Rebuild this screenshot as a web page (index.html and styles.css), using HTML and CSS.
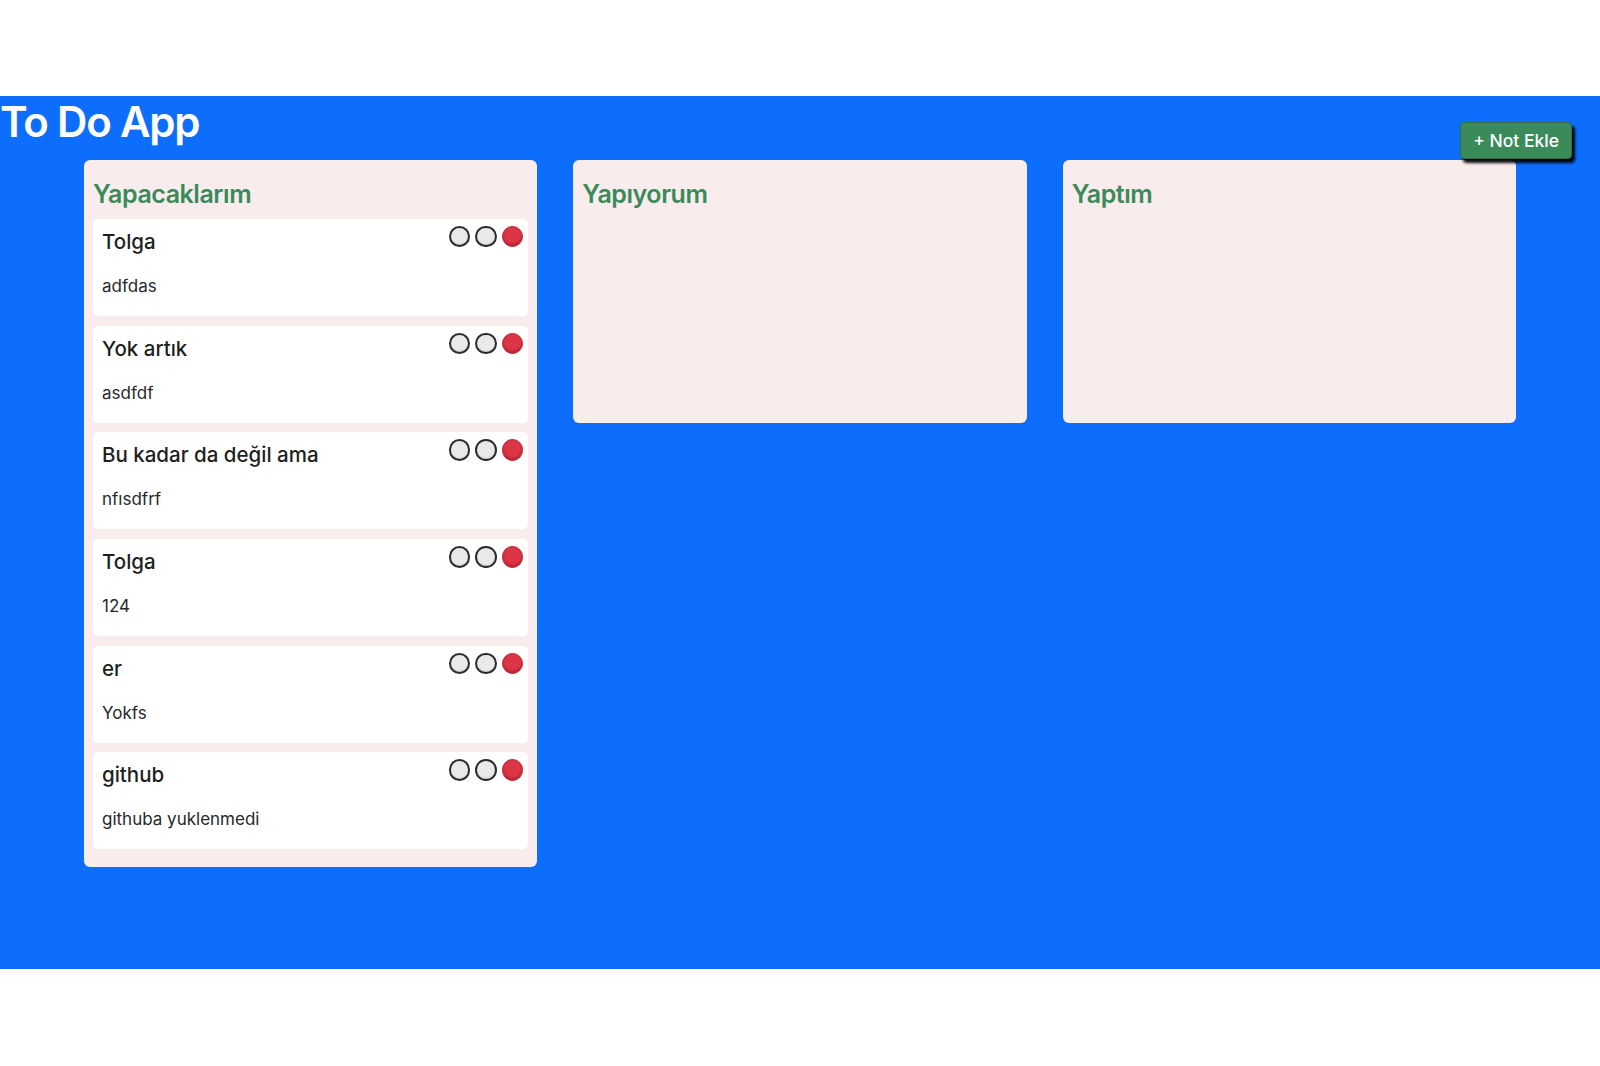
FILE: index.html
```html
<!DOCTYPE html>
<html lang="tr">
<head>
<meta charset="utf-8">
<title>To Do App</title>
<link rel="stylesheet" href="styles.css">
</head>
<body>
<div class="page">
  <main class="app">
    <header class="app-header">
      <h1 class="app-title">To Do App</h1>
      <button class="add-btn" type="button">+ Not Ekle</button>
    </header>
    <div class="board">
      <section class="column">
        <h3 class="column-title">Yapacaklarım</h3>
        <div class="card">
          <div class="card-head"><h5 class="card-title">Tolga</h5><div class="dots"><span class="dot"></span><span class="dot"></span><span class="dot dot-red"></span></div></div>
          <p class="card-text">adfdas</p>
        </div>
        <div class="card">
          <div class="card-head"><h5 class="card-title">Yok artık</h5><div class="dots"><span class="dot"></span><span class="dot"></span><span class="dot dot-red"></span></div></div>
          <p class="card-text">asdfdf</p>
        </div>
        <div class="card">
          <div class="card-head"><h5 class="card-title">Bu kadar da değil ama</h5><div class="dots"><span class="dot"></span><span class="dot"></span><span class="dot dot-red"></span></div></div>
          <p class="card-text">nfısdfrf</p>
        </div>
        <div class="card">
          <div class="card-head"><h5 class="card-title">Tolga</h5><div class="dots"><span class="dot"></span><span class="dot"></span><span class="dot dot-red"></span></div></div>
          <p class="card-text">124</p>
        </div>
        <div class="card">
          <div class="card-head"><h5 class="card-title">er</h5><div class="dots"><span class="dot"></span><span class="dot"></span><span class="dot dot-red"></span></div></div>
          <p class="card-text">Yokfs</p>
        </div>
        <div class="card">
          <div class="card-head"><h5 class="card-title">github</h5><div class="dots"><span class="dot"></span><span class="dot"></span><span class="dot dot-red"></span></div></div>
          <p class="card-text">githuba yuklenmedi</p>
        </div>
      </section>
      <section class="column">
        <h3 class="column-title">Yapıyorum</h3>
      </section>
      <section class="column">
        <h3 class="column-title">Yaptım</h3>
      </section>
    </div>
  </main>
</div>
</body>
</html>
```

FILE: styles.css
```css
* { box-sizing: border-box; }
html, body { margin: 0; padding: 0; background: #ffffff; }
body { font-family: Inter, "Liberation Sans", Arial, sans-serif; color: #212529; }

.page { padding: 96px 0 97px; }

.app {
  background: #0d6efd;
  height: 873px;
}

.app-header {
  display: flex;
  justify-content: space-between;
  align-items: flex-start;
  height: 64px;
}

.app-title {
  margin: 0;
  padding: 2px 0 0 0;
  font-size: 42px;
  line-height: 48px;
  font-weight: 600;
  letter-spacing: -1.2px;
  color: #ffffff;
}

.add-btn {
  margin: 26px 28px 0 0;
  height: 37px;
  padding: 0 12px;
  background: #3a8a5a;
  color: #ffffff;
  border: 1px solid #2d6e47;
  border-radius: 4px;
  font-family: Inter, "Liberation Sans", Arial, sans-serif;
  font-size: 17.5px;
  font-weight: 500;
  box-shadow: 3px 4px 3px rgba(0, 0, 0, 0.95);
  position: relative;
  z-index: 2;
}

.board {
  display: grid;
  grid-template-columns: repeat(3, 1fr);
  gap: 36px;
  padding: 0 84px;
  align-items: start;
}

.column {
  background: #f8ecec;
  border-radius: 6px;
  padding: 9px 9px 18px;
  min-height: 263px;
  display: flex;
  flex-direction: column;
  gap: 9.7px;
}

.column-title {
  margin: 10px 0 0.3px 0;
  font-size: 25px;
  line-height: 30px;
  font-weight: 600;
  color: #3a8a5a;
  letter-spacing: -0.45px;
}

.card {
  background: #ffffff;
  border-radius: 5px;
  padding: 10px 5px 17px 9px;
  height: 97px;
}

.card-head {
  display: flex;
  justify-content: space-between;
  align-items: flex-start;
}

.card-title {
  margin: 0;
  font-size: 20.5px;
  line-height: 25px;
  font-weight: 500;
  color: #1d1f22;
}

.dots {
  display: flex;
  gap: 5px;
  margin-top: -3px;
}

.dot {
  width: 21.5px;
  height: 21.5px;
  border-radius: 50%;
  background: #e9e9e9;
  border: 2px solid #2b2b2b;
  box-shadow: inset 0 -1px 1px rgba(0,0,0,0.15);
}

.dot-red {
  background: #dc3545;
  border: 1px solid #b3283a;
  box-shadow: inset 0 -2px 2px rgba(120, 0, 20, 0.35);
}

.card-text {
  margin: 20px 0 0;
  font-size: 17px;
  line-height: 25px;
  color: #26292d;
}
```
